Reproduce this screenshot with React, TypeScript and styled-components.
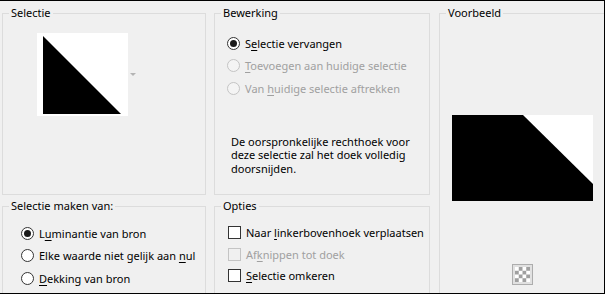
import React from 'react';
import styled, { createGlobalStyle, css } from 'styled-components';

const GlobalStyle = createGlobalStyle`
  html, body {
    margin: 0;
    padding: 0;
    background: #f0f0f0;
  }
  body {
    font-family: "Noto Sans", "Liberation Sans", sans-serif;
    font-size: 11px;
    color: #000;
  }
`;

const Frame = styled.div`
  width: 605px;
  height: 294px;
  box-sizing: border-box;
  border-top: 1px solid #000;
  border-right: 1px solid #000;
  border-bottom: 1px solid #000;
  background: #f0f0f0;
  overflow: hidden;
  display: grid;
  grid-template-columns: 204px 216px 168px;
  grid-template-rows: 190px 100px;
  column-gap: 8px;
  row-gap: 3px;
  padding: 4px 0 0 2px;
`;

const Group = styled.fieldset<{ $tall?: boolean }>`
  margin: 0;
  padding: 0;
  min-width: 0;
  border: 1px solid #dcdcdc;
  box-sizing: border-box;
  display: flex;
  flex-direction: column;
  ${(p) =>
    p.$tall &&
    css`
      grid-column: 3;
      grid-row: 1 / span 2;
      margin-left: 1px;
      width: 167px;
    `}
`;

const Legend = styled.legend`
  margin-left: 6px;
  padding: 0 2px;
  line-height: 16px;
  font-size: 11px;
`;

const Body = styled.div<{ $pt: number; $pl: number }>`
  padding-top: ${(p) => p.$pt}px;
  padding-left: ${(p) => p.$pl}px;
  display: flex;
  flex-direction: column;
`;

const ThumbRow = styled.div`
  display: flex;
  align-items: center;
  gap: 2px;
`;

const Option = styled.label<{ $disabled?: boolean; $h?: number }>`
  display: flex;
  align-items: center;
  height: ${(p) => p.$h ?? 22}px;
  gap: 5px;
  white-space: nowrap;
  font-size: 11px;
  color: ${(p) => (p.$disabled ? '#a0a0a0' : '#000')};
  & u {
    text-decoration: underline;
    text-underline-offset: 2px;
  }
`;

const RadioCircle = styled.span<{ $checked?: boolean; $disabled?: boolean }>`
  width: 13px;
  height: 13px;
  box-sizing: border-box;
  border-radius: 50%;
  border: 1px solid ${(p) => (p.$disabled ? '#c4c4c4' : '#333')};
  background: ${(p) => (p.$disabled ? '#f4f4f4' : '#fff')};
  display: flex;
  align-items: center;
  justify-content: center;
  flex: none;
  &::after {
    content: '';
    width: 7px;
    height: 7px;
    border-radius: 50%;
    background: #1a1a1a;
    display: ${(p) => (p.$checked ? 'block' : 'none')};
  }
`;

const CheckBox = styled.span<{ $disabled?: boolean }>`
  width: 13px;
  height: 13px;
  box-sizing: border-box;
  border: 1px solid ${(p) => (p.$disabled ? '#c4c4c4' : '#333')};
  background: ${(p) => (p.$disabled ? '#f0f0f0' : '#fff')};
  flex: none;
`;

const Note = styled.p`
  margin: 35px 0 0 4px;
  line-height: 13.5px;
  font-size: 11px;
  white-space: nowrap;
`;

const PreviewBody = styled.div`
  display: flex;
  flex-direction: column;
  align-items: center;
  padding-top: 94px;
`;

const Checker = styled.button`
  margin-top: 63px;
  width: 21px;
  height: 21px;
  padding: 0;
  box-sizing: border-box;
  border: 1px solid #adadad;
  background: #e1e1e1;
  display: flex;
  align-items: center;
  justify-content: center;
  &::before {
    content: '';
    width: 15px;
    height: 15px;
    background-color: #fff;
    background-image: conic-gradient(#a0a0a0 25%, #fff 0 50%, #a0a0a0 0 75%, #fff 0);
    background-size: 7.5px 7.5px;
  }
`;

type RadioProps = { checked?: boolean; disabled?: boolean; children: React.ReactNode };

const Radio = ({ checked, disabled, children }: RadioProps) => (
  <Option $disabled={disabled} $h={22.5}>
    <RadioCircle $checked={checked} $disabled={disabled} />
    <span>{children}</span>
  </Option>
);

const Check = ({ disabled, children }: { disabled?: boolean; children: React.ReactNode }) => (
  <Option $disabled={disabled} $h={21.5}>
    <CheckBox $disabled={disabled} />
    <span>{children}</span>
  </Option>
);

export default function App() {
  return (
    <>
      <GlobalStyle />
      <Frame>
        <Group>
          <Legend>Selectie</Legend>
          <Body $pt={12} $pl={34}>
            <ThumbRow>
              <svg width="91" height="83" viewBox="0 0 91 83">
                <rect width="91" height="83" fill="#fff" />
                <polygon points="6,3 6,81 84,81" fill="#000" />
              </svg>
              <svg width="6" height="4" viewBox="0 0 6 4">
                <polygon points="0,0 6,0 3,3" fill="#b4b4b4" />
              </svg>
            </ThumbRow>
          </Body>
        </Group>

        <Group>
          <Legend>Bewerking</Legend>
          <Body $pt={11} $pl={12}>
            <Radio checked>
              S<u>e</u>lectie vervangen
            </Radio>
            <Radio disabled>
              <u>T</u>oevoegen aan huidige selectie
            </Radio>
            <Radio disabled>
              Van <u>h</u>uidige selectie aftrekken
            </Radio>
            <Note>
              De oorspronkelijke rechthoek voor
              <br />
              deze selectie zal het doek volledig
              <br />
              doorsnijden.
            </Note>
          </Body>
        </Group>

        <Group $tall>
          <Legend>Voorbeeld</Legend>
          <PreviewBody>
            <svg width="141" height="86" viewBox="0 0 141 86">
              <rect width="141" height="86" fill="#000" />
              <polygon points="71,0 141,0 141,69" fill="#fff" />
            </svg>
            <Checker aria-label="Transparantie" />
          </PreviewBody>
        </Group>

        <Group>
          <Legend>Selectie maken van:</Legend>
          <Body $pt={8} $pl={18}>
            <Radio checked>
              L<u>u</u>minantie van bron
            </Radio>
            <Radio>
              Elke waarde niet gelijk aan <u>n</u>ul
            </Radio>
            <Radio>
              <u>D</u>ekking van bron
            </Radio>
          </Body>
        </Group>

        <Group>
          <Legend>Opties</Legend>
          <Body $pt={8} $pl={13}>
            <Check>
              Naar <u>l</u>inkerbovenhoek verplaatsen
            </Check>
            <Check disabled>
              Af<u>k</u>nippen tot doek
            </Check>
            <Check>
              <u>S</u>electie omkeren
            </Check>
          </Body>
        </Group>
      </Frame>
    </>
  );
}
